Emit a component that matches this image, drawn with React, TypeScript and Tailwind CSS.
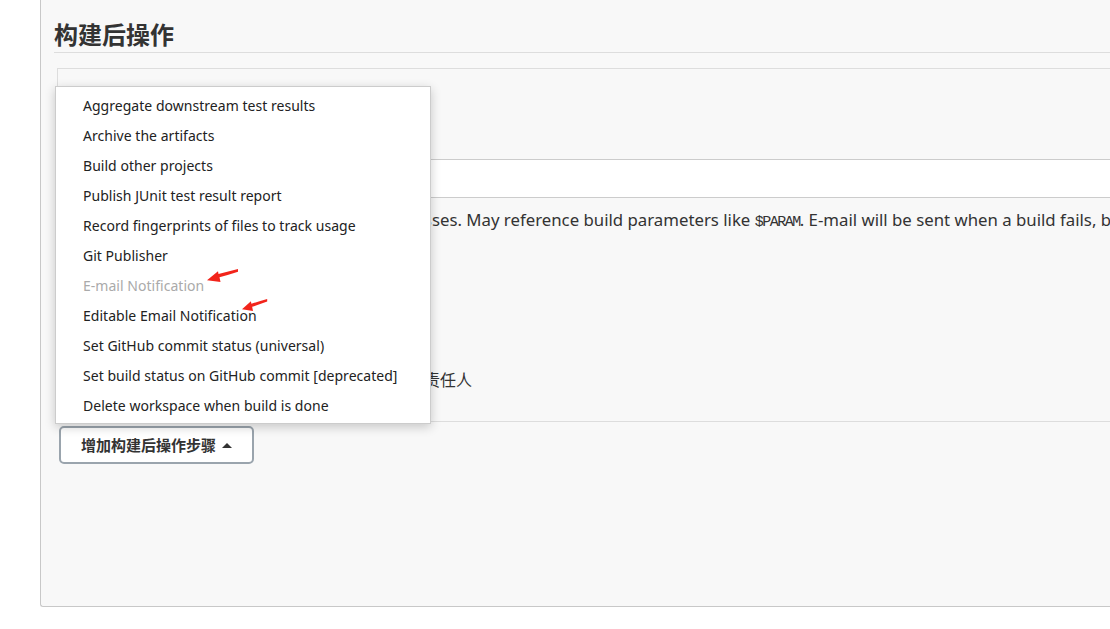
const items = [
  "Aggregate downstream test results",
  "Archive the artifacts",
  "Build other projects",
  "Publish JUnit test result report",
  "Record fingerprints of files to track usage",
  "Git Publisher",
  "E-mail Notification",
  "Editable Email Notification",
  "Set GitHub commit status (universal)",
  "Set build status on GitHub commit [deprecated]",
  "Delete workspace when build is done",
];

function RedArrow({ className, w, h }: { className: string; w: number; h: number }) {
  return (
    <svg className={className} width={w} height={h} viewBox="0 0 32 14" preserveAspectRatio="none">
      <path d="M0 12 L11 2.5 L11.5 5.5 Q20 3 31 0 L31 3 Q21 6.5 12.5 9 L13.5 14 Z" fill="#f2241b" />
    </svg>
  );
}

export default function App() {
  return (
    <div
      className="relative w-[1110px] h-[629px] overflow-hidden bg-white text-[#333]"
      style={{ fontFamily: '"Noto Sans", "Noto Sans CJK SC", sans-serif' }}
    >
      <div className="ml-[40px] h-[607px] border-l border-b border-[#c8c8c8] rounded-bl-[3px] bg-[#f8f8f8] pl-[13px]">
        <h2 className="pt-[18px] pb-[2px] leading-[32px] text-[24px] font-bold text-[#333] border-b border-[#dddddd] [font-family:'Noto_Sans_CJK_SC',sans-serif]">
          构建后操作
        </h2>

        <div className="mt-[15px] ml-[3px] h-[354px] border-t border-l border-b border-[#dddddd] overflow-hidden">
          <div className="h-[90px]" />
          <div className="ml-[140px] h-[39px] border-t border-b border-[#cccccc] bg-white" />
          <p className="mt-[11px] pl-[19px] whitespace-nowrap text-[16.8px] leading-[22px] text-[#333]">
            Whitespace-separated list of recipient addresses. May reference build parameters like{" "}
            <code className="[font-family:'Liberation_Mono',monospace] text-[15px] tracking-[-1.5px]">$PARAM</code>.
            E-mail will be sent when a build fails, becomes unstable or returns to stable.
          </p>
          <p className="mt-[135px] pl-[62px] whitespace-nowrap text-[16px] leading-[22px] text-[#333]">
            为每个构建不稳定的提交者单独发送邮件给责任人
          </p>
        </div>

        <button className="mt-[4px] ml-[5px] h-[38px] w-[195px] rounded-[5px] border-2 border-[#9aa4ad] bg-white pl-[20px] text-left text-[15px] font-bold text-[#333] flex items-center gap-[6px]">
          <span>增加构建后操作步骤</span>
          <span className="inline-block h-0 w-0 border-x-[5px] border-b-[5px] border-x-transparent border-b-[#333]" />
        </button>
      </div>

      <ul className="absolute left-[55px] top-[86px] w-[376px] border border-[#cccccc] bg-white py-[3px] shadow-[0_3px_10px_rgba(0,0,0,0.2)]">
        {items.map((t) => (
          <li
            key={t}
            className={
              "h-[30px] pl-[27px] flex items-center text-[14px] tracking-[0.03px] " +
              (t === "E-mail Notification" ? "text-[#aaaaaa]" : "text-[#222]")
            }
          >
            {t}
          </li>
        ))}
      </ul>

      <RedArrow className="absolute left-[207px] top-[269px]" w={32} h={13} />
      <RedArrow className="absolute left-[242px] top-[299px]" w={26} h={12} />
    </div>
  );
}
